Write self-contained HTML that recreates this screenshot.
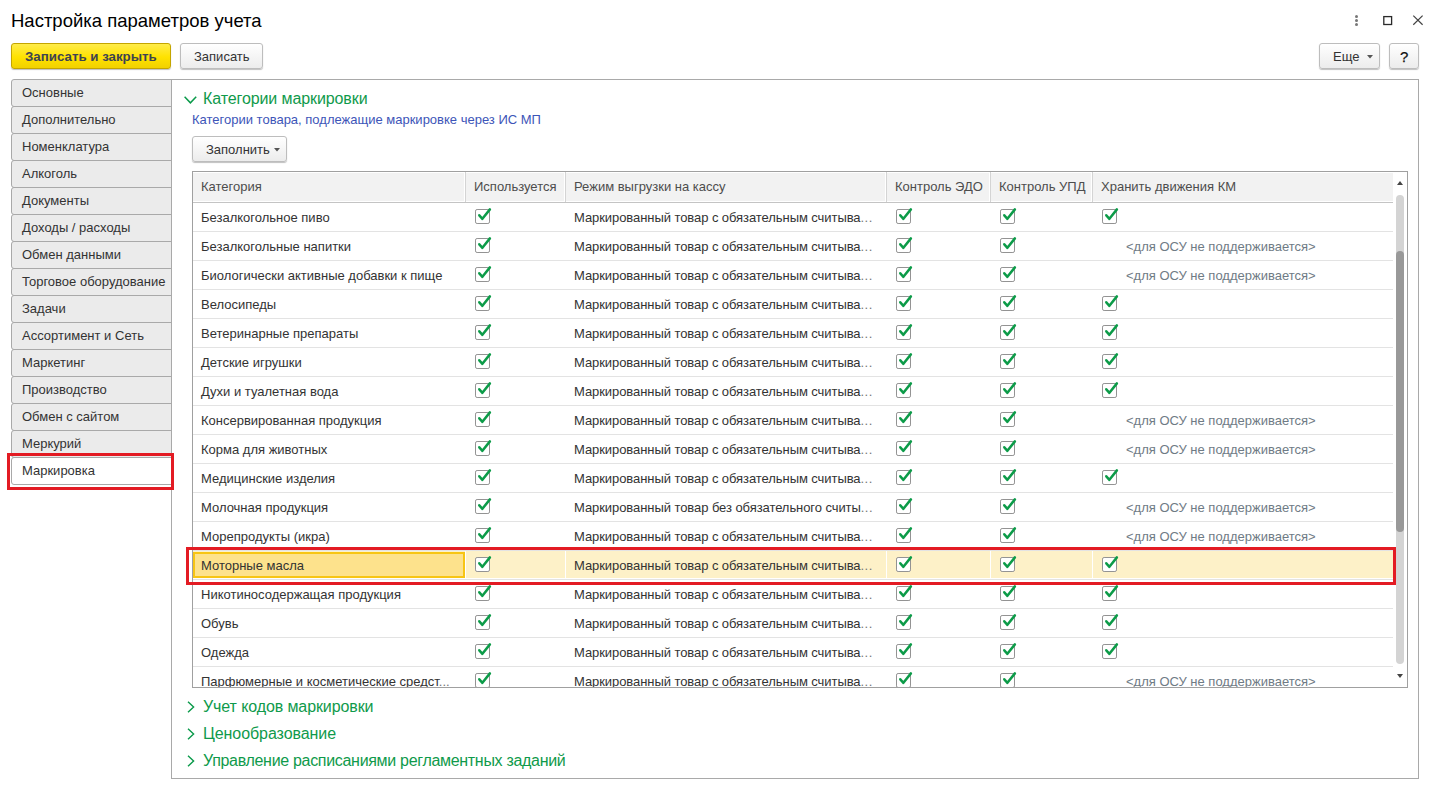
<!DOCTYPE html><html><head><meta charset="utf-8"><style>
html,body{margin:0;padding:0;background:#fff;width:1435px;height:787px;overflow:hidden;position:relative;font-family:"Liberation Sans",sans-serif;}
.t{position:absolute;white-space:nowrap;}
.a{position:absolute;box-sizing:border-box;}
.cb{position:absolute;width:17px;height:17px;}
.cb svg{display:block}
</style></head><body>
<div class="t" style="left:11px;top:12.34px;font-size:18.5px;line-height:18.5px;color:#000;">Настройка параметров учета</div>
<svg class="a" style="left:1350px;top:12px" width="80" height="18" viewBox="0 0 80 18"><circle cx="6.5" cy="4.4" r="1.5" fill="#777"/><circle cx="6.5" cy="8.45" r="1.5" fill="#777"/><circle cx="6.5" cy="12.5" r="1.5" fill="#777"/><rect x="33.8" y="4.6" width="7.8" height="7.9" fill="none" stroke="#2a2a2a" stroke-width="1.3"/><path d="M63.3 3.6 L72.6 12.8 M72.6 3.6 L63.3 12.8" stroke="#444" stroke-width="1.2"/></svg>
<div class="a" style="left:11px;top:43px;width:160px;height:26px;border:1px solid #c4a500;border-radius:3px;background:linear-gradient(#ffec4a,#ffe200 55%,#f1d100);box-shadow:0 1px 1px rgba(0,0,0,.25)"></div>
<div class="t" style="left:25px;top:49.74px;font-size:13.3px;line-height:13.3px;color:#3d4352;font-weight:bold;">Записать и закрыть</div>
<div class="a" style="left:180px;top:43px;width:83px;height:26px;border:1px solid #bdbdbd;border-radius:3px;background:linear-gradient(#fff,#ececec);box-shadow:0 1px 1px rgba(0,0,0,.25)"></div>
<div class="t" style="left:194px;top:50.00px;font-size:13px;line-height:13px;color:#333;">Записать</div>
<div class="a" style="left:1319px;top:43px;width:61px;height:26px;border:1px solid #bdbdbd;border-radius:3px;background:linear-gradient(#fff,#ececec);box-shadow:0 1px 1px rgba(0,0,0,.25)"></div>
<div class="t" style="left:1333px;top:50.00px;font-size:13px;line-height:13px;color:#333;">Еще</div>
<svg class="a" style="left:1367px;top:55px" width="6" height="4"><path d="M0 0 L6 0 L3 3.5 Z" fill="#555"/></svg>
<div class="a" style="left:1389px;top:43px;width:30px;height:26px;border:1px solid #bdbdbd;border-radius:3px;background:linear-gradient(#fff,#ececec);box-shadow:0 1px 1px rgba(0,0,0,.25)"></div>
<div class="t" style="left:1400px;top:49.30px;font-size:15px;line-height:15px;color:#111;-webkit-text-stroke:0.25px #111;">?</div>
<div class="a" style="left:11px;top:79px;width:162px;height:28px;border:1px solid #a9a9a9;border-radius:3px 0 0 3px;background:#ebebeb"></div>
<div class="t" style="left:22px;top:86.00px;font-size:13px;line-height:13px;color:#333;">Основные</div>
<div class="a" style="left:11px;top:106px;width:162px;height:28px;border:1px solid #a9a9a9;border-radius:3px 0 0 3px;background:#ebebeb"></div>
<div class="t" style="left:22px;top:113.00px;font-size:13px;line-height:13px;color:#333;">Дополнительно</div>
<div class="a" style="left:11px;top:133px;width:162px;height:28px;border:1px solid #a9a9a9;border-radius:3px 0 0 3px;background:#ebebeb"></div>
<div class="t" style="left:22px;top:140.00px;font-size:13px;line-height:13px;color:#333;">Номенклатура</div>
<div class="a" style="left:11px;top:160px;width:162px;height:28px;border:1px solid #a9a9a9;border-radius:3px 0 0 3px;background:#ebebeb"></div>
<div class="t" style="left:22px;top:167.00px;font-size:13px;line-height:13px;color:#333;">Алкоголь</div>
<div class="a" style="left:11px;top:187px;width:162px;height:28px;border:1px solid #a9a9a9;border-radius:3px 0 0 3px;background:#ebebeb"></div>
<div class="t" style="left:22px;top:194.00px;font-size:13px;line-height:13px;color:#333;">Документы</div>
<div class="a" style="left:11px;top:214px;width:162px;height:28px;border:1px solid #a9a9a9;border-radius:3px 0 0 3px;background:#ebebeb"></div>
<div class="t" style="left:22px;top:221.00px;font-size:13px;line-height:13px;color:#333;">Доходы / расходы</div>
<div class="a" style="left:11px;top:241px;width:162px;height:28px;border:1px solid #a9a9a9;border-radius:3px 0 0 3px;background:#ebebeb"></div>
<div class="t" style="left:22px;top:248.00px;font-size:13px;line-height:13px;color:#333;">Обмен данными</div>
<div class="a" style="left:11px;top:268px;width:162px;height:28px;border:1px solid #a9a9a9;border-radius:3px 0 0 3px;background:#ebebeb"></div>
<div class="t" style="left:22px;top:275.00px;font-size:13px;line-height:13px;color:#333;">Торговое оборудование</div>
<div class="a" style="left:11px;top:295px;width:162px;height:28px;border:1px solid #a9a9a9;border-radius:3px 0 0 3px;background:#ebebeb"></div>
<div class="t" style="left:22px;top:302.00px;font-size:13px;line-height:13px;color:#333;">Задачи</div>
<div class="a" style="left:11px;top:322px;width:162px;height:28px;border:1px solid #a9a9a9;border-radius:3px 0 0 3px;background:#ebebeb"></div>
<div class="t" style="left:22px;top:329.00px;font-size:13px;line-height:13px;color:#333;">Ассортимент и Сеть</div>
<div class="a" style="left:11px;top:349px;width:162px;height:28px;border:1px solid #a9a9a9;border-radius:3px 0 0 3px;background:#ebebeb"></div>
<div class="t" style="left:22px;top:356.00px;font-size:13px;line-height:13px;color:#333;">Маркетинг</div>
<div class="a" style="left:11px;top:376px;width:162px;height:28px;border:1px solid #a9a9a9;border-radius:3px 0 0 3px;background:#ebebeb"></div>
<div class="t" style="left:22px;top:383.00px;font-size:13px;line-height:13px;color:#333;">Производство</div>
<div class="a" style="left:11px;top:403px;width:162px;height:28px;border:1px solid #a9a9a9;border-radius:3px 0 0 3px;background:#ebebeb"></div>
<div class="t" style="left:22px;top:410.00px;font-size:13px;line-height:13px;color:#333;">Обмен с сайтом</div>
<div class="a" style="left:11px;top:430px;width:162px;height:28px;border:1px solid #a9a9a9;border-radius:3px 0 0 3px;background:#ebebeb"></div>
<div class="t" style="left:22px;top:437.00px;font-size:13px;line-height:13px;color:#333;">Меркурий</div>
<div class="a" style="left:11px;top:457px;width:162px;height:28px;border:1px solid #a9a9a9;border-radius:3px 0 0 3px;background:#fff"></div>
<div class="t" style="left:22px;top:464.00px;font-size:13px;line-height:13px;color:#333;">Маркировка</div>
<div class="a" style="left:171px;top:79px;width:1248px;height:700px;border:1px solid #a9a9a9;background:#fff"></div>
<svg class="a" style="left:183px;top:94.5px" width="16" height="10"><path d="M1.6 1.8 L7.4 7.8 L13.2 1.8" fill="none" stroke="#0a9a4a" stroke-width="1.5"/></svg>
<div class="t" style="left:203px;top:91.46px;font-size:16px;line-height:16px;color:#0f9a4b;letter-spacing:-0.1px;">Категории маркировки</div>
<div class="t" style="left:192px;top:113.00px;font-size:13px;line-height:13px;color:#3d55b8;">Категории товара, подлежащие маркировке через ИС МП</div>
<div class="a" style="left:192px;top:136px;width:95px;height:26px;border:1px solid #bdbdbd;border-radius:3px;background:linear-gradient(#fff,#ececec);box-shadow:0 1px 1px rgba(0,0,0,.25)"></div>
<div class="t" style="left:206px;top:143.00px;font-size:13px;line-height:13px;color:#333;">Заполнить</div>
<svg class="a" style="left:274px;top:148px" width="6" height="4"><path d="M0 0 L6 0 L3 3.5 Z" fill="#555"/></svg>
<div class="a" style="left:192px;top:171px;width:1216px;height:517px;border:1px solid #a0a0a0;background:#fff;overflow:hidden">
<div class="a" style="left:0px;top:1px;width:271px;height:28px;background:#f2f2f2"></div>
<div class="a" style="left:273px;top:1px;width:98px;height:28px;background:#f2f2f2"></div>
<div class="a" style="left:373px;top:1px;width:319px;height:28px;background:#f2f2f2"></div>
<div class="a" style="left:694px;top:1px;width:102px;height:28px;background:#f2f2f2"></div>
<div class="a" style="left:798px;top:1px;width:100px;height:28px;background:#f2f2f2"></div>
<div class="a" style="left:900px;top:1px;width:300px;height:28px;background:#f2f2f2"></div>
<div class="a" style="left:272px;top:0px;width:1px;height:30px;background:#d4d4d4"></div>
<div class="a" style="left:372px;top:0px;width:1px;height:30px;background:#d4d4d4"></div>
<div class="a" style="left:693px;top:0px;width:1px;height:30px;background:#d4d4d4"></div>
<div class="a" style="left:797px;top:0px;width:1px;height:30px;background:#d4d4d4"></div>
<div class="a" style="left:899px;top:0px;width:1px;height:30px;background:#d4d4d4"></div>
<div class="a" style="left:0;top:30px;width:1200px;height:1px;background:#c4c4c4"></div>
</div>
<div class="t" style="left:201px;top:180.00px;font-size:13px;line-height:13px;color:#4d4d4d;">Категория</div>
<div class="t" style="left:474px;top:180.00px;font-size:13px;line-height:13px;color:#4d4d4d;">Используется</div>
<div class="t" style="left:574px;top:180.00px;font-size:13px;line-height:13px;color:#4d4d4d;">Режим выгрузки на кассу</div>
<div class="t" style="left:895px;top:180.00px;font-size:13px;line-height:13px;color:#4d4d4d;">Контроль ЭДО</div>
<div class="t" style="left:999px;top:180.00px;font-size:13px;line-height:13px;color:#4d4d4d;">Контроль УПД</div>
<div class="t" style="left:1101px;top:180.00px;font-size:13px;line-height:13px;color:#4d4d4d;">Хранить движения КМ</div>
<div class="a" style="left:193px;top:231px;width:1200px;height:1px;background:#e3e3e3"></div>
<div class="t" style="left:201px;top:211.00px;font-size:13px;line-height:13px;color:#333;">Безалкогольное пиво</div>
<div class="t" style="left:574px;top:211.00px;font-size:13px;line-height:13px;color:#333;letter-spacing:-0.07px;">Маркированный товар с обязательным считыва<span style='color:#777;letter-spacing:0.45px'>...</span></div>
<div class="cb" style="left:475px;top:207px"><svg width="17" height="17" viewBox="0 0 17 17"><rect x="0.5" y="2.5" width="14" height="14" rx="1.6" fill="#fff" stroke="#939393" stroke-width="1"/><path d="M4.3 8.3 L7.4 11.8 L14.9 2.4" fill="none" stroke="#0c9b48" stroke-width="2.5" stroke-linecap="round" stroke-linejoin="round"/></svg></div>
<div class="cb" style="left:896px;top:207px"><svg width="17" height="17" viewBox="0 0 17 17"><rect x="0.5" y="2.5" width="14" height="14" rx="1.6" fill="#fff" stroke="#939393" stroke-width="1"/><path d="M4.3 8.3 L7.4 11.8 L14.9 2.4" fill="none" stroke="#0c9b48" stroke-width="2.5" stroke-linecap="round" stroke-linejoin="round"/></svg></div>
<div class="cb" style="left:1000px;top:207px"><svg width="17" height="17" viewBox="0 0 17 17"><rect x="0.5" y="2.5" width="14" height="14" rx="1.6" fill="#fff" stroke="#939393" stroke-width="1"/><path d="M4.3 8.3 L7.4 11.8 L14.9 2.4" fill="none" stroke="#0c9b48" stroke-width="2.5" stroke-linecap="round" stroke-linejoin="round"/></svg></div>
<div class="cb" style="left:1102px;top:207px"><svg width="17" height="17" viewBox="0 0 17 17"><rect x="0.5" y="2.5" width="14" height="14" rx="1.6" fill="#fff" stroke="#939393" stroke-width="1"/><path d="M4.3 8.3 L7.4 11.8 L14.9 2.4" fill="none" stroke="#0c9b48" stroke-width="2.5" stroke-linecap="round" stroke-linejoin="round"/></svg></div>
<div class="a" style="left:193px;top:260px;width:1200px;height:1px;background:#e3e3e3"></div>
<div class="t" style="left:201px;top:240.00px;font-size:13px;line-height:13px;color:#333;">Безалкогольные напитки</div>
<div class="t" style="left:574px;top:240.00px;font-size:13px;line-height:13px;color:#333;letter-spacing:-0.07px;">Маркированный товар с обязательным считыва<span style='color:#777;letter-spacing:0.45px'>...</span></div>
<div class="cb" style="left:475px;top:236px"><svg width="17" height="17" viewBox="0 0 17 17"><rect x="0.5" y="2.5" width="14" height="14" rx="1.6" fill="#fff" stroke="#939393" stroke-width="1"/><path d="M4.3 8.3 L7.4 11.8 L14.9 2.4" fill="none" stroke="#0c9b48" stroke-width="2.5" stroke-linecap="round" stroke-linejoin="round"/></svg></div>
<div class="cb" style="left:896px;top:236px"><svg width="17" height="17" viewBox="0 0 17 17"><rect x="0.5" y="2.5" width="14" height="14" rx="1.6" fill="#fff" stroke="#939393" stroke-width="1"/><path d="M4.3 8.3 L7.4 11.8 L14.9 2.4" fill="none" stroke="#0c9b48" stroke-width="2.5" stroke-linecap="round" stroke-linejoin="round"/></svg></div>
<div class="cb" style="left:1000px;top:236px"><svg width="17" height="17" viewBox="0 0 17 17"><rect x="0.5" y="2.5" width="14" height="14" rx="1.6" fill="#fff" stroke="#939393" stroke-width="1"/><path d="M4.3 8.3 L7.4 11.8 L14.9 2.4" fill="none" stroke="#0c9b48" stroke-width="2.5" stroke-linecap="round" stroke-linejoin="round"/></svg></div>
<div class="t" style="left:1126px;top:240.00px;font-size:13px;line-height:13px;color:#6f7b85;">&lt;для ОСУ не поддерживается&gt;</div>
<div class="a" style="left:193px;top:289px;width:1200px;height:1px;background:#e3e3e3"></div>
<div class="t" style="left:201px;top:269.00px;font-size:13px;line-height:13px;color:#333;">Биологически активные добавки к пище</div>
<div class="t" style="left:574px;top:269.00px;font-size:13px;line-height:13px;color:#333;letter-spacing:-0.07px;">Маркированный товар с обязательным считыва<span style='color:#777;letter-spacing:0.45px'>...</span></div>
<div class="cb" style="left:475px;top:265px"><svg width="17" height="17" viewBox="0 0 17 17"><rect x="0.5" y="2.5" width="14" height="14" rx="1.6" fill="#fff" stroke="#939393" stroke-width="1"/><path d="M4.3 8.3 L7.4 11.8 L14.9 2.4" fill="none" stroke="#0c9b48" stroke-width="2.5" stroke-linecap="round" stroke-linejoin="round"/></svg></div>
<div class="cb" style="left:896px;top:265px"><svg width="17" height="17" viewBox="0 0 17 17"><rect x="0.5" y="2.5" width="14" height="14" rx="1.6" fill="#fff" stroke="#939393" stroke-width="1"/><path d="M4.3 8.3 L7.4 11.8 L14.9 2.4" fill="none" stroke="#0c9b48" stroke-width="2.5" stroke-linecap="round" stroke-linejoin="round"/></svg></div>
<div class="cb" style="left:1000px;top:265px"><svg width="17" height="17" viewBox="0 0 17 17"><rect x="0.5" y="2.5" width="14" height="14" rx="1.6" fill="#fff" stroke="#939393" stroke-width="1"/><path d="M4.3 8.3 L7.4 11.8 L14.9 2.4" fill="none" stroke="#0c9b48" stroke-width="2.5" stroke-linecap="round" stroke-linejoin="round"/></svg></div>
<div class="t" style="left:1126px;top:269.00px;font-size:13px;line-height:13px;color:#6f7b85;">&lt;для ОСУ не поддерживается&gt;</div>
<div class="a" style="left:193px;top:318px;width:1200px;height:1px;background:#e3e3e3"></div>
<div class="t" style="left:201px;top:298.00px;font-size:13px;line-height:13px;color:#333;">Велосипеды</div>
<div class="t" style="left:574px;top:298.00px;font-size:13px;line-height:13px;color:#333;letter-spacing:-0.07px;">Маркированный товар с обязательным считыва<span style='color:#777;letter-spacing:0.45px'>...</span></div>
<div class="cb" style="left:475px;top:294px"><svg width="17" height="17" viewBox="0 0 17 17"><rect x="0.5" y="2.5" width="14" height="14" rx="1.6" fill="#fff" stroke="#939393" stroke-width="1"/><path d="M4.3 8.3 L7.4 11.8 L14.9 2.4" fill="none" stroke="#0c9b48" stroke-width="2.5" stroke-linecap="round" stroke-linejoin="round"/></svg></div>
<div class="cb" style="left:896px;top:294px"><svg width="17" height="17" viewBox="0 0 17 17"><rect x="0.5" y="2.5" width="14" height="14" rx="1.6" fill="#fff" stroke="#939393" stroke-width="1"/><path d="M4.3 8.3 L7.4 11.8 L14.9 2.4" fill="none" stroke="#0c9b48" stroke-width="2.5" stroke-linecap="round" stroke-linejoin="round"/></svg></div>
<div class="cb" style="left:1000px;top:294px"><svg width="17" height="17" viewBox="0 0 17 17"><rect x="0.5" y="2.5" width="14" height="14" rx="1.6" fill="#fff" stroke="#939393" stroke-width="1"/><path d="M4.3 8.3 L7.4 11.8 L14.9 2.4" fill="none" stroke="#0c9b48" stroke-width="2.5" stroke-linecap="round" stroke-linejoin="round"/></svg></div>
<div class="cb" style="left:1102px;top:294px"><svg width="17" height="17" viewBox="0 0 17 17"><rect x="0.5" y="2.5" width="14" height="14" rx="1.6" fill="#fff" stroke="#939393" stroke-width="1"/><path d="M4.3 8.3 L7.4 11.8 L14.9 2.4" fill="none" stroke="#0c9b48" stroke-width="2.5" stroke-linecap="round" stroke-linejoin="round"/></svg></div>
<div class="a" style="left:193px;top:347px;width:1200px;height:1px;background:#e3e3e3"></div>
<div class="t" style="left:201px;top:327.00px;font-size:13px;line-height:13px;color:#333;">Ветеринарные препараты</div>
<div class="t" style="left:574px;top:327.00px;font-size:13px;line-height:13px;color:#333;letter-spacing:-0.07px;">Маркированный товар с обязательным считыва<span style='color:#777;letter-spacing:0.45px'>...</span></div>
<div class="cb" style="left:475px;top:323px"><svg width="17" height="17" viewBox="0 0 17 17"><rect x="0.5" y="2.5" width="14" height="14" rx="1.6" fill="#fff" stroke="#939393" stroke-width="1"/><path d="M4.3 8.3 L7.4 11.8 L14.9 2.4" fill="none" stroke="#0c9b48" stroke-width="2.5" stroke-linecap="round" stroke-linejoin="round"/></svg></div>
<div class="cb" style="left:896px;top:323px"><svg width="17" height="17" viewBox="0 0 17 17"><rect x="0.5" y="2.5" width="14" height="14" rx="1.6" fill="#fff" stroke="#939393" stroke-width="1"/><path d="M4.3 8.3 L7.4 11.8 L14.9 2.4" fill="none" stroke="#0c9b48" stroke-width="2.5" stroke-linecap="round" stroke-linejoin="round"/></svg></div>
<div class="cb" style="left:1000px;top:323px"><svg width="17" height="17" viewBox="0 0 17 17"><rect x="0.5" y="2.5" width="14" height="14" rx="1.6" fill="#fff" stroke="#939393" stroke-width="1"/><path d="M4.3 8.3 L7.4 11.8 L14.9 2.4" fill="none" stroke="#0c9b48" stroke-width="2.5" stroke-linecap="round" stroke-linejoin="round"/></svg></div>
<div class="cb" style="left:1102px;top:323px"><svg width="17" height="17" viewBox="0 0 17 17"><rect x="0.5" y="2.5" width="14" height="14" rx="1.6" fill="#fff" stroke="#939393" stroke-width="1"/><path d="M4.3 8.3 L7.4 11.8 L14.9 2.4" fill="none" stroke="#0c9b48" stroke-width="2.5" stroke-linecap="round" stroke-linejoin="round"/></svg></div>
<div class="a" style="left:193px;top:376px;width:1200px;height:1px;background:#e3e3e3"></div>
<div class="t" style="left:201px;top:356.00px;font-size:13px;line-height:13px;color:#333;">Детские игрушки</div>
<div class="t" style="left:574px;top:356.00px;font-size:13px;line-height:13px;color:#333;letter-spacing:-0.07px;">Маркированный товар с обязательным считыва<span style='color:#777;letter-spacing:0.45px'>...</span></div>
<div class="cb" style="left:475px;top:352px"><svg width="17" height="17" viewBox="0 0 17 17"><rect x="0.5" y="2.5" width="14" height="14" rx="1.6" fill="#fff" stroke="#939393" stroke-width="1"/><path d="M4.3 8.3 L7.4 11.8 L14.9 2.4" fill="none" stroke="#0c9b48" stroke-width="2.5" stroke-linecap="round" stroke-linejoin="round"/></svg></div>
<div class="cb" style="left:896px;top:352px"><svg width="17" height="17" viewBox="0 0 17 17"><rect x="0.5" y="2.5" width="14" height="14" rx="1.6" fill="#fff" stroke="#939393" stroke-width="1"/><path d="M4.3 8.3 L7.4 11.8 L14.9 2.4" fill="none" stroke="#0c9b48" stroke-width="2.5" stroke-linecap="round" stroke-linejoin="round"/></svg></div>
<div class="cb" style="left:1000px;top:352px"><svg width="17" height="17" viewBox="0 0 17 17"><rect x="0.5" y="2.5" width="14" height="14" rx="1.6" fill="#fff" stroke="#939393" stroke-width="1"/><path d="M4.3 8.3 L7.4 11.8 L14.9 2.4" fill="none" stroke="#0c9b48" stroke-width="2.5" stroke-linecap="round" stroke-linejoin="round"/></svg></div>
<div class="cb" style="left:1102px;top:352px"><svg width="17" height="17" viewBox="0 0 17 17"><rect x="0.5" y="2.5" width="14" height="14" rx="1.6" fill="#fff" stroke="#939393" stroke-width="1"/><path d="M4.3 8.3 L7.4 11.8 L14.9 2.4" fill="none" stroke="#0c9b48" stroke-width="2.5" stroke-linecap="round" stroke-linejoin="round"/></svg></div>
<div class="a" style="left:193px;top:405px;width:1200px;height:1px;background:#e3e3e3"></div>
<div class="t" style="left:201px;top:385.00px;font-size:13px;line-height:13px;color:#333;">Духи и туалетная вода</div>
<div class="t" style="left:574px;top:385.00px;font-size:13px;line-height:13px;color:#333;letter-spacing:-0.07px;">Маркированный товар с обязательным считыва<span style='color:#777;letter-spacing:0.45px'>...</span></div>
<div class="cb" style="left:475px;top:381px"><svg width="17" height="17" viewBox="0 0 17 17"><rect x="0.5" y="2.5" width="14" height="14" rx="1.6" fill="#fff" stroke="#939393" stroke-width="1"/><path d="M4.3 8.3 L7.4 11.8 L14.9 2.4" fill="none" stroke="#0c9b48" stroke-width="2.5" stroke-linecap="round" stroke-linejoin="round"/></svg></div>
<div class="cb" style="left:896px;top:381px"><svg width="17" height="17" viewBox="0 0 17 17"><rect x="0.5" y="2.5" width="14" height="14" rx="1.6" fill="#fff" stroke="#939393" stroke-width="1"/><path d="M4.3 8.3 L7.4 11.8 L14.9 2.4" fill="none" stroke="#0c9b48" stroke-width="2.5" stroke-linecap="round" stroke-linejoin="round"/></svg></div>
<div class="cb" style="left:1000px;top:381px"><svg width="17" height="17" viewBox="0 0 17 17"><rect x="0.5" y="2.5" width="14" height="14" rx="1.6" fill="#fff" stroke="#939393" stroke-width="1"/><path d="M4.3 8.3 L7.4 11.8 L14.9 2.4" fill="none" stroke="#0c9b48" stroke-width="2.5" stroke-linecap="round" stroke-linejoin="round"/></svg></div>
<div class="cb" style="left:1102px;top:381px"><svg width="17" height="17" viewBox="0 0 17 17"><rect x="0.5" y="2.5" width="14" height="14" rx="1.6" fill="#fff" stroke="#939393" stroke-width="1"/><path d="M4.3 8.3 L7.4 11.8 L14.9 2.4" fill="none" stroke="#0c9b48" stroke-width="2.5" stroke-linecap="round" stroke-linejoin="round"/></svg></div>
<div class="a" style="left:193px;top:434px;width:1200px;height:1px;background:#e3e3e3"></div>
<div class="t" style="left:201px;top:414.00px;font-size:13px;line-height:13px;color:#333;">Консервированная продукция</div>
<div class="t" style="left:574px;top:414.00px;font-size:13px;line-height:13px;color:#333;letter-spacing:-0.07px;">Маркированный товар с обязательным считыва<span style='color:#777;letter-spacing:0.45px'>...</span></div>
<div class="cb" style="left:475px;top:410px"><svg width="17" height="17" viewBox="0 0 17 17"><rect x="0.5" y="2.5" width="14" height="14" rx="1.6" fill="#fff" stroke="#939393" stroke-width="1"/><path d="M4.3 8.3 L7.4 11.8 L14.9 2.4" fill="none" stroke="#0c9b48" stroke-width="2.5" stroke-linecap="round" stroke-linejoin="round"/></svg></div>
<div class="cb" style="left:896px;top:410px"><svg width="17" height="17" viewBox="0 0 17 17"><rect x="0.5" y="2.5" width="14" height="14" rx="1.6" fill="#fff" stroke="#939393" stroke-width="1"/><path d="M4.3 8.3 L7.4 11.8 L14.9 2.4" fill="none" stroke="#0c9b48" stroke-width="2.5" stroke-linecap="round" stroke-linejoin="round"/></svg></div>
<div class="cb" style="left:1000px;top:410px"><svg width="17" height="17" viewBox="0 0 17 17"><rect x="0.5" y="2.5" width="14" height="14" rx="1.6" fill="#fff" stroke="#939393" stroke-width="1"/><path d="M4.3 8.3 L7.4 11.8 L14.9 2.4" fill="none" stroke="#0c9b48" stroke-width="2.5" stroke-linecap="round" stroke-linejoin="round"/></svg></div>
<div class="t" style="left:1126px;top:414.00px;font-size:13px;line-height:13px;color:#6f7b85;">&lt;для ОСУ не поддерживается&gt;</div>
<div class="a" style="left:193px;top:463px;width:1200px;height:1px;background:#e3e3e3"></div>
<div class="t" style="left:201px;top:443.00px;font-size:13px;line-height:13px;color:#333;">Корма для животных</div>
<div class="t" style="left:574px;top:443.00px;font-size:13px;line-height:13px;color:#333;letter-spacing:-0.07px;">Маркированный товар с обязательным считыва<span style='color:#777;letter-spacing:0.45px'>...</span></div>
<div class="cb" style="left:475px;top:439px"><svg width="17" height="17" viewBox="0 0 17 17"><rect x="0.5" y="2.5" width="14" height="14" rx="1.6" fill="#fff" stroke="#939393" stroke-width="1"/><path d="M4.3 8.3 L7.4 11.8 L14.9 2.4" fill="none" stroke="#0c9b48" stroke-width="2.5" stroke-linecap="round" stroke-linejoin="round"/></svg></div>
<div class="cb" style="left:896px;top:439px"><svg width="17" height="17" viewBox="0 0 17 17"><rect x="0.5" y="2.5" width="14" height="14" rx="1.6" fill="#fff" stroke="#939393" stroke-width="1"/><path d="M4.3 8.3 L7.4 11.8 L14.9 2.4" fill="none" stroke="#0c9b48" stroke-width="2.5" stroke-linecap="round" stroke-linejoin="round"/></svg></div>
<div class="cb" style="left:1000px;top:439px"><svg width="17" height="17" viewBox="0 0 17 17"><rect x="0.5" y="2.5" width="14" height="14" rx="1.6" fill="#fff" stroke="#939393" stroke-width="1"/><path d="M4.3 8.3 L7.4 11.8 L14.9 2.4" fill="none" stroke="#0c9b48" stroke-width="2.5" stroke-linecap="round" stroke-linejoin="round"/></svg></div>
<div class="t" style="left:1126px;top:443.00px;font-size:13px;line-height:13px;color:#6f7b85;">&lt;для ОСУ не поддерживается&gt;</div>
<div class="a" style="left:193px;top:492px;width:1200px;height:1px;background:#e3e3e3"></div>
<div class="t" style="left:201px;top:472.00px;font-size:13px;line-height:13px;color:#333;">Медицинские изделия</div>
<div class="t" style="left:574px;top:472.00px;font-size:13px;line-height:13px;color:#333;letter-spacing:-0.07px;">Маркированный товар с обязательным считыва<span style='color:#777;letter-spacing:0.45px'>...</span></div>
<div class="cb" style="left:475px;top:468px"><svg width="17" height="17" viewBox="0 0 17 17"><rect x="0.5" y="2.5" width="14" height="14" rx="1.6" fill="#fff" stroke="#939393" stroke-width="1"/><path d="M4.3 8.3 L7.4 11.8 L14.9 2.4" fill="none" stroke="#0c9b48" stroke-width="2.5" stroke-linecap="round" stroke-linejoin="round"/></svg></div>
<div class="cb" style="left:896px;top:468px"><svg width="17" height="17" viewBox="0 0 17 17"><rect x="0.5" y="2.5" width="14" height="14" rx="1.6" fill="#fff" stroke="#939393" stroke-width="1"/><path d="M4.3 8.3 L7.4 11.8 L14.9 2.4" fill="none" stroke="#0c9b48" stroke-width="2.5" stroke-linecap="round" stroke-linejoin="round"/></svg></div>
<div class="cb" style="left:1000px;top:468px"><svg width="17" height="17" viewBox="0 0 17 17"><rect x="0.5" y="2.5" width="14" height="14" rx="1.6" fill="#fff" stroke="#939393" stroke-width="1"/><path d="M4.3 8.3 L7.4 11.8 L14.9 2.4" fill="none" stroke="#0c9b48" stroke-width="2.5" stroke-linecap="round" stroke-linejoin="round"/></svg></div>
<div class="cb" style="left:1102px;top:468px"><svg width="17" height="17" viewBox="0 0 17 17"><rect x="0.5" y="2.5" width="14" height="14" rx="1.6" fill="#fff" stroke="#939393" stroke-width="1"/><path d="M4.3 8.3 L7.4 11.8 L14.9 2.4" fill="none" stroke="#0c9b48" stroke-width="2.5" stroke-linecap="round" stroke-linejoin="round"/></svg></div>
<div class="a" style="left:193px;top:521px;width:1200px;height:1px;background:#e3e3e3"></div>
<div class="t" style="left:201px;top:501.00px;font-size:13px;line-height:13px;color:#333;">Молочная продукция</div>
<div class="t" style="left:574px;top:501.00px;font-size:13px;line-height:13px;color:#333;letter-spacing:-0.07px;">Маркированный товар без обязательного считы<span style='color:#777;letter-spacing:0.45px'>...</span></div>
<div class="cb" style="left:475px;top:497px"><svg width="17" height="17" viewBox="0 0 17 17"><rect x="0.5" y="2.5" width="14" height="14" rx="1.6" fill="#fff" stroke="#939393" stroke-width="1"/><path d="M4.3 8.3 L7.4 11.8 L14.9 2.4" fill="none" stroke="#0c9b48" stroke-width="2.5" stroke-linecap="round" stroke-linejoin="round"/></svg></div>
<div class="cb" style="left:896px;top:497px"><svg width="17" height="17" viewBox="0 0 17 17"><rect x="0.5" y="2.5" width="14" height="14" rx="1.6" fill="#fff" stroke="#939393" stroke-width="1"/><path d="M4.3 8.3 L7.4 11.8 L14.9 2.4" fill="none" stroke="#0c9b48" stroke-width="2.5" stroke-linecap="round" stroke-linejoin="round"/></svg></div>
<div class="cb" style="left:1000px;top:497px"><svg width="17" height="17" viewBox="0 0 17 17"><rect x="0.5" y="2.5" width="14" height="14" rx="1.6" fill="#fff" stroke="#939393" stroke-width="1"/><path d="M4.3 8.3 L7.4 11.8 L14.9 2.4" fill="none" stroke="#0c9b48" stroke-width="2.5" stroke-linecap="round" stroke-linejoin="round"/></svg></div>
<div class="t" style="left:1126px;top:501.00px;font-size:13px;line-height:13px;color:#6f7b85;">&lt;для ОСУ не поддерживается&gt;</div>
<div class="a" style="left:193px;top:550px;width:1200px;height:1px;background:#e3e3e3"></div>
<div class="t" style="left:201px;top:530.00px;font-size:13px;line-height:13px;color:#333;">Морепродукты (икра)</div>
<div class="t" style="left:574px;top:530.00px;font-size:13px;line-height:13px;color:#333;letter-spacing:-0.07px;">Маркированный товар с обязательным считыва<span style='color:#777;letter-spacing:0.45px'>...</span></div>
<div class="cb" style="left:475px;top:526px"><svg width="17" height="17" viewBox="0 0 17 17"><rect x="0.5" y="2.5" width="14" height="14" rx="1.6" fill="#fff" stroke="#939393" stroke-width="1"/><path d="M4.3 8.3 L7.4 11.8 L14.9 2.4" fill="none" stroke="#0c9b48" stroke-width="2.5" stroke-linecap="round" stroke-linejoin="round"/></svg></div>
<div class="cb" style="left:896px;top:526px"><svg width="17" height="17" viewBox="0 0 17 17"><rect x="0.5" y="2.5" width="14" height="14" rx="1.6" fill="#fff" stroke="#939393" stroke-width="1"/><path d="M4.3 8.3 L7.4 11.8 L14.9 2.4" fill="none" stroke="#0c9b48" stroke-width="2.5" stroke-linecap="round" stroke-linejoin="round"/></svg></div>
<div class="cb" style="left:1000px;top:526px"><svg width="17" height="17" viewBox="0 0 17 17"><rect x="0.5" y="2.5" width="14" height="14" rx="1.6" fill="#fff" stroke="#939393" stroke-width="1"/><path d="M4.3 8.3 L7.4 11.8 L14.9 2.4" fill="none" stroke="#0c9b48" stroke-width="2.5" stroke-linecap="round" stroke-linejoin="round"/></svg></div>
<div class="t" style="left:1126px;top:530.00px;font-size:13px;line-height:13px;color:#6f7b85;">&lt;для ОСУ не поддерживается&gt;</div>
<div class="a" style="left:193px;top:551px;width:1200px;height:27px;background:#fdf1c8"></div>
<div class="a" style="left:465px;top:551px;width:1px;height:27px;background:#fff"></div>
<div class="a" style="left:565px;top:551px;width:1px;height:27px;background:#fff"></div>
<div class="a" style="left:886px;top:551px;width:1px;height:27px;background:#fff"></div>
<div class="a" style="left:990px;top:551px;width:1px;height:27px;background:#fff"></div>
<div class="a" style="left:1092px;top:551px;width:1px;height:27px;background:#fff"></div>
<div class="a" style="left:193px;top:552px;width:272px;height:26px;border:2px solid #f7c514;background:#fde28c"></div>
<div class="a" style="left:193px;top:579px;width:1200px;height:1px;background:#e3e3e3"></div>
<div class="t" style="left:201px;top:559.00px;font-size:13px;line-height:13px;color:#333;">Моторные масла</div>
<div class="t" style="left:574px;top:559.00px;font-size:13px;line-height:13px;color:#333;letter-spacing:-0.07px;">Маркированный товар с обязательным считыва<span style='color:#777;letter-spacing:0.45px'>...</span></div>
<div class="cb" style="left:475px;top:555px"><svg width="17" height="17" viewBox="0 0 17 17"><rect x="0.5" y="2.5" width="14" height="14" rx="1.6" fill="#fff" stroke="#939393" stroke-width="1"/><path d="M4.3 8.3 L7.4 11.8 L14.9 2.4" fill="none" stroke="#0c9b48" stroke-width="2.5" stroke-linecap="round" stroke-linejoin="round"/></svg></div>
<div class="cb" style="left:896px;top:555px"><svg width="17" height="17" viewBox="0 0 17 17"><rect x="0.5" y="2.5" width="14" height="14" rx="1.6" fill="#fff" stroke="#939393" stroke-width="1"/><path d="M4.3 8.3 L7.4 11.8 L14.9 2.4" fill="none" stroke="#0c9b48" stroke-width="2.5" stroke-linecap="round" stroke-linejoin="round"/></svg></div>
<div class="cb" style="left:1000px;top:555px"><svg width="17" height="17" viewBox="0 0 17 17"><rect x="0.5" y="2.5" width="14" height="14" rx="1.6" fill="#fff" stroke="#939393" stroke-width="1"/><path d="M4.3 8.3 L7.4 11.8 L14.9 2.4" fill="none" stroke="#0c9b48" stroke-width="2.5" stroke-linecap="round" stroke-linejoin="round"/></svg></div>
<div class="cb" style="left:1102px;top:555px"><svg width="17" height="17" viewBox="0 0 17 17"><rect x="0.5" y="2.5" width="14" height="14" rx="1.6" fill="#fff" stroke="#939393" stroke-width="1"/><path d="M4.3 8.3 L7.4 11.8 L14.9 2.4" fill="none" stroke="#0c9b48" stroke-width="2.5" stroke-linecap="round" stroke-linejoin="round"/></svg></div>
<div class="a" style="left:193px;top:608px;width:1200px;height:1px;background:#e3e3e3"></div>
<div class="t" style="left:201px;top:588.00px;font-size:13px;line-height:13px;color:#333;">Никотиносодержащая продукция</div>
<div class="t" style="left:574px;top:588.00px;font-size:13px;line-height:13px;color:#333;letter-spacing:-0.07px;">Маркированный товар с обязательным считыва<span style='color:#777;letter-spacing:0.45px'>...</span></div>
<div class="cb" style="left:475px;top:584px"><svg width="17" height="17" viewBox="0 0 17 17"><rect x="0.5" y="2.5" width="14" height="14" rx="1.6" fill="#fff" stroke="#939393" stroke-width="1"/><path d="M4.3 8.3 L7.4 11.8 L14.9 2.4" fill="none" stroke="#0c9b48" stroke-width="2.5" stroke-linecap="round" stroke-linejoin="round"/></svg></div>
<div class="cb" style="left:896px;top:584px"><svg width="17" height="17" viewBox="0 0 17 17"><rect x="0.5" y="2.5" width="14" height="14" rx="1.6" fill="#fff" stroke="#939393" stroke-width="1"/><path d="M4.3 8.3 L7.4 11.8 L14.9 2.4" fill="none" stroke="#0c9b48" stroke-width="2.5" stroke-linecap="round" stroke-linejoin="round"/></svg></div>
<div class="cb" style="left:1000px;top:584px"><svg width="17" height="17" viewBox="0 0 17 17"><rect x="0.5" y="2.5" width="14" height="14" rx="1.6" fill="#fff" stroke="#939393" stroke-width="1"/><path d="M4.3 8.3 L7.4 11.8 L14.9 2.4" fill="none" stroke="#0c9b48" stroke-width="2.5" stroke-linecap="round" stroke-linejoin="round"/></svg></div>
<div class="cb" style="left:1102px;top:584px"><svg width="17" height="17" viewBox="0 0 17 17"><rect x="0.5" y="2.5" width="14" height="14" rx="1.6" fill="#fff" stroke="#939393" stroke-width="1"/><path d="M4.3 8.3 L7.4 11.8 L14.9 2.4" fill="none" stroke="#0c9b48" stroke-width="2.5" stroke-linecap="round" stroke-linejoin="round"/></svg></div>
<div class="a" style="left:193px;top:637px;width:1200px;height:1px;background:#e3e3e3"></div>
<div class="t" style="left:201px;top:617.00px;font-size:13px;line-height:13px;color:#333;">Обувь</div>
<div class="t" style="left:574px;top:617.00px;font-size:13px;line-height:13px;color:#333;letter-spacing:-0.07px;">Маркированный товар с обязательным считыва<span style='color:#777;letter-spacing:0.45px'>...</span></div>
<div class="cb" style="left:475px;top:613px"><svg width="17" height="17" viewBox="0 0 17 17"><rect x="0.5" y="2.5" width="14" height="14" rx="1.6" fill="#fff" stroke="#939393" stroke-width="1"/><path d="M4.3 8.3 L7.4 11.8 L14.9 2.4" fill="none" stroke="#0c9b48" stroke-width="2.5" stroke-linecap="round" stroke-linejoin="round"/></svg></div>
<div class="cb" style="left:896px;top:613px"><svg width="17" height="17" viewBox="0 0 17 17"><rect x="0.5" y="2.5" width="14" height="14" rx="1.6" fill="#fff" stroke="#939393" stroke-width="1"/><path d="M4.3 8.3 L7.4 11.8 L14.9 2.4" fill="none" stroke="#0c9b48" stroke-width="2.5" stroke-linecap="round" stroke-linejoin="round"/></svg></div>
<div class="cb" style="left:1000px;top:613px"><svg width="17" height="17" viewBox="0 0 17 17"><rect x="0.5" y="2.5" width="14" height="14" rx="1.6" fill="#fff" stroke="#939393" stroke-width="1"/><path d="M4.3 8.3 L7.4 11.8 L14.9 2.4" fill="none" stroke="#0c9b48" stroke-width="2.5" stroke-linecap="round" stroke-linejoin="round"/></svg></div>
<div class="cb" style="left:1102px;top:613px"><svg width="17" height="17" viewBox="0 0 17 17"><rect x="0.5" y="2.5" width="14" height="14" rx="1.6" fill="#fff" stroke="#939393" stroke-width="1"/><path d="M4.3 8.3 L7.4 11.8 L14.9 2.4" fill="none" stroke="#0c9b48" stroke-width="2.5" stroke-linecap="round" stroke-linejoin="round"/></svg></div>
<div class="a" style="left:193px;top:666px;width:1200px;height:1px;background:#e3e3e3"></div>
<div class="t" style="left:201px;top:646.00px;font-size:13px;line-height:13px;color:#333;">Одежда</div>
<div class="t" style="left:574px;top:646.00px;font-size:13px;line-height:13px;color:#333;letter-spacing:-0.07px;">Маркированный товар с обязательным считыва<span style='color:#777;letter-spacing:0.45px'>...</span></div>
<div class="cb" style="left:475px;top:642px"><svg width="17" height="17" viewBox="0 0 17 17"><rect x="0.5" y="2.5" width="14" height="14" rx="1.6" fill="#fff" stroke="#939393" stroke-width="1"/><path d="M4.3 8.3 L7.4 11.8 L14.9 2.4" fill="none" stroke="#0c9b48" stroke-width="2.5" stroke-linecap="round" stroke-linejoin="round"/></svg></div>
<div class="cb" style="left:896px;top:642px"><svg width="17" height="17" viewBox="0 0 17 17"><rect x="0.5" y="2.5" width="14" height="14" rx="1.6" fill="#fff" stroke="#939393" stroke-width="1"/><path d="M4.3 8.3 L7.4 11.8 L14.9 2.4" fill="none" stroke="#0c9b48" stroke-width="2.5" stroke-linecap="round" stroke-linejoin="round"/></svg></div>
<div class="cb" style="left:1000px;top:642px"><svg width="17" height="17" viewBox="0 0 17 17"><rect x="0.5" y="2.5" width="14" height="14" rx="1.6" fill="#fff" stroke="#939393" stroke-width="1"/><path d="M4.3 8.3 L7.4 11.8 L14.9 2.4" fill="none" stroke="#0c9b48" stroke-width="2.5" stroke-linecap="round" stroke-linejoin="round"/></svg></div>
<div class="cb" style="left:1102px;top:642px"><svg width="17" height="17" viewBox="0 0 17 17"><rect x="0.5" y="2.5" width="14" height="14" rx="1.6" fill="#fff" stroke="#939393" stroke-width="1"/><path d="M4.3 8.3 L7.4 11.8 L14.9 2.4" fill="none" stroke="#0c9b48" stroke-width="2.5" stroke-linecap="round" stroke-linejoin="round"/></svg></div>
<div class="t" style="left:201px;top:675.00px;font-size:13px;line-height:13px;color:#333;">Парфюмерные и косметические средст<span style='color:#777'>...</span></div>
<div class="t" style="left:574px;top:675.00px;font-size:13px;line-height:13px;color:#333;letter-spacing:-0.07px;">Маркированный товар с обязательным считыва<span style='color:#777;letter-spacing:0.45px'>...</span></div>
<div class="cb" style="left:475px;top:671px"><svg width="17" height="17" viewBox="0 0 17 17"><rect x="0.5" y="2.5" width="14" height="14" rx="1.6" fill="#fff" stroke="#939393" stroke-width="1"/><path d="M4.3 8.3 L7.4 11.8 L14.9 2.4" fill="none" stroke="#0c9b48" stroke-width="2.5" stroke-linecap="round" stroke-linejoin="round"/></svg></div>
<div class="cb" style="left:896px;top:671px"><svg width="17" height="17" viewBox="0 0 17 17"><rect x="0.5" y="2.5" width="14" height="14" rx="1.6" fill="#fff" stroke="#939393" stroke-width="1"/><path d="M4.3 8.3 L7.4 11.8 L14.9 2.4" fill="none" stroke="#0c9b48" stroke-width="2.5" stroke-linecap="round" stroke-linejoin="round"/></svg></div>
<div class="cb" style="left:1000px;top:671px"><svg width="17" height="17" viewBox="0 0 17 17"><rect x="0.5" y="2.5" width="14" height="14" rx="1.6" fill="#fff" stroke="#939393" stroke-width="1"/><path d="M4.3 8.3 L7.4 11.8 L14.9 2.4" fill="none" stroke="#0c9b48" stroke-width="2.5" stroke-linecap="round" stroke-linejoin="round"/></svg></div>
<div class="t" style="left:1126px;top:675.00px;font-size:13px;line-height:13px;color:#6f7b85;">&lt;для ОСУ не поддерживается&gt;</div>
<div class="a" style="left:172px;top:688px;width:1240px;height:10px;background:#fff"></div>
<div class="a" style="left:192px;top:687px;width:1216px;height:1px;background:#a0a0a0"></div>
<svg class="a" style="left:1396px;top:180px" width="8" height="6"><path d="M1 5 L4 1 L7 5 Z" fill="#444"/></svg>
<div class="a" style="left:1396px;top:195px;width:8px;height:469px;border-radius:4px;background:#d4d4d4"></div>
<div class="a" style="left:1396px;top:251px;width:8px;height:281px;border-radius:4px;background:#999"></div>
<svg class="a" style="left:1396px;top:673px" width="8" height="6"><path d="M1 1 L7 1 L4 5 Z" fill="#444"/></svg>
<svg class="a" style="left:185px;top:699.5px" width="10" height="14"><path d="M3 1.8 L8.6 7 L3 12.2" fill="none" stroke="#0a9a4a" stroke-width="1.4"/></svg>
<div class="t" style="left:203px;top:699.46px;font-size:16px;line-height:16px;color:#0f9a4b;letter-spacing:-0.1px;">Учет кодов маркировки</div>
<svg class="a" style="left:185px;top:726.5px" width="10" height="14"><path d="M3 1.8 L8.6 7 L3 12.2" fill="none" stroke="#0a9a4a" stroke-width="1.4"/></svg>
<div class="t" style="left:203px;top:726.46px;font-size:16px;line-height:16px;color:#0f9a4b;letter-spacing:-0.07px;">Ценообразование</div>
<svg class="a" style="left:185px;top:753.5px" width="10" height="14"><path d="M3 1.8 L8.6 7 L3 12.2" fill="none" stroke="#0a9a4a" stroke-width="1.4"/></svg>
<div class="t" style="left:203px;top:753.46px;font-size:16px;line-height:16px;color:#0f9a4b;letter-spacing:-0.31px;">Управление расписаниями регламентных заданий</div>
<div class="a" style="left:7px;top:453px;width:167px;height:37px;border:3px solid #e31b23"></div>
<div class="a" style="left:186px;top:547px;width:1210px;height:38px;border:3px solid #e31b23"></div>
</body></html>
